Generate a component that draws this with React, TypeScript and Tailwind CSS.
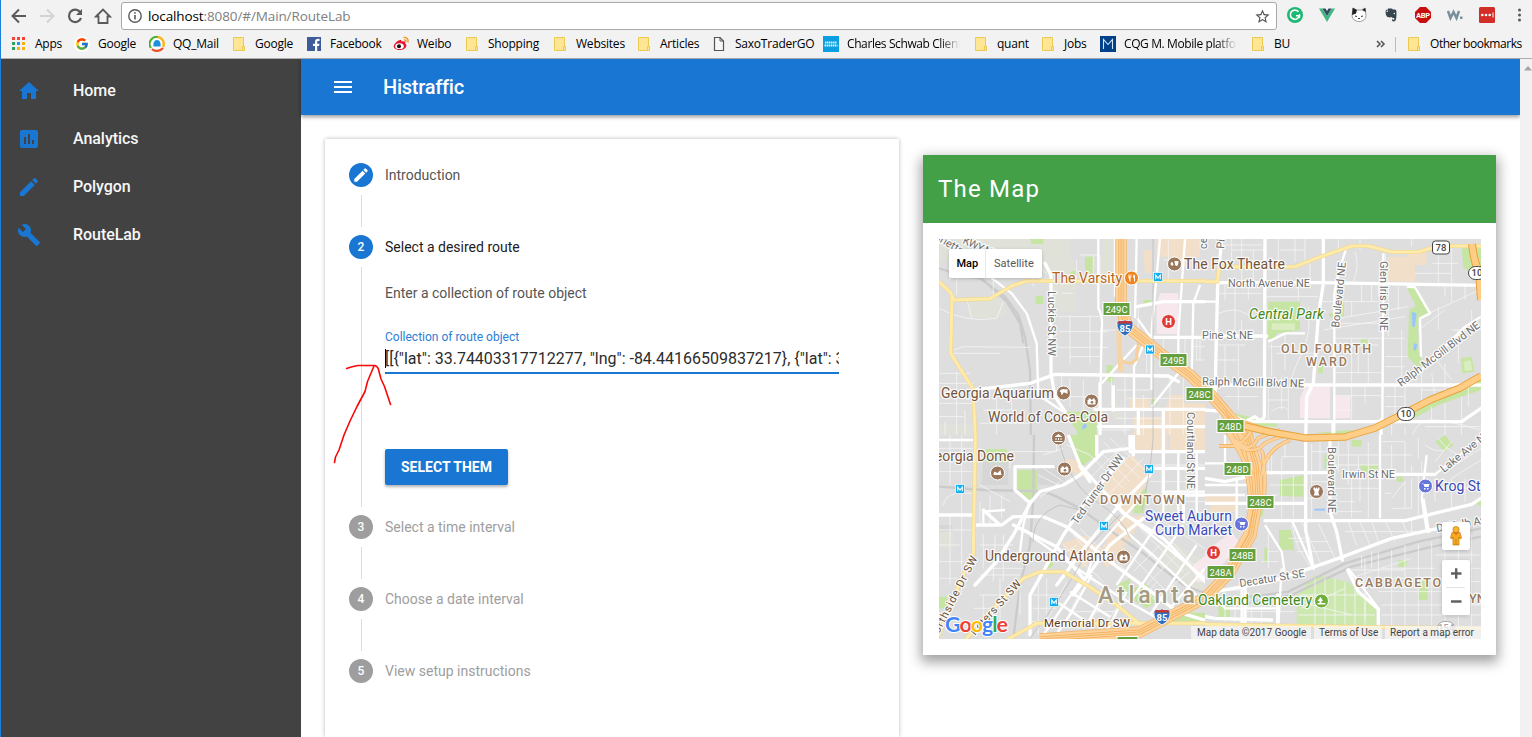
import type { ReactNode } from "react";
import { MdHome, MdAssessment, MdEdit, MdBuild, MdMenu, MdStarBorder } from "react-icons/md";
import { FcGoogle } from "react-icons/fc";

/* ---------- Browser chrome ---------- */

const Folder = () => (
  <svg className="shrink-0" width="16" height="16" viewBox="0 0 16 16">
    <path d="M2.500 1.500h10v9h1v4h-11z" fill="#ffe694" stroke="#ecc94f" />
    <path d="M11.500 14v-3.500h2" fill="none" stroke="#ecc94f" />
  </svg>
);
const AppsIcon = () => (
  <svg width="16" height="16" viewBox="0 0 16 16">
    {["#f44336", "#f44336", "#f44336", "#2fa35c", "#2196f3", "#f9b10c", "#2fa35c", "#f9b10c", "#f9b10c"].map((c, i) => (
      <rect key={i} x={1 + (i % 3) * 5} y={1 + Math.floor(i / 3) * 5} width="3" height="3" fill={c} />
    ))}
  </svg>
);
const GoogleG = () => (
  <span className="flex size-4 items-center justify-center rounded-full bg-white"><FcGoogle size={14} /></span>
);
const QQ = () => (
  <svg width="16" height="16" viewBox="0 0 16 16">
    <circle cx="8" cy="8" r="7.500" fill="#fff" />
    <path d="M9 1A7 7 0 0 0 2 12" fill="none" stroke="#4cae2c" strokeWidth="2" />
    <path d="M9 1a7 7 0 0 1 5 10" fill="none" stroke="#f9b51b" strokeWidth="2.500" />
    <path d="M3 13c3 3 8 2.500 11-1" fill="none" stroke="#f04e23" strokeWidth="2.200" />
    <path d="M8 4c3 0 4 3 3.500 6.500h-7C4 7 5 4 8 4z" fill="#1c8fe0" />
  </svg>
);
const Facebook = () => (
  <svg width="16" height="16" viewBox="0 0 16 16">
    <rect x="1" y="1" width="14" height="14" fill="#3f5c9a" />
    <path d="M9 15v-5H7V7.800h2V6c0-2 1.200-3.200 3-3.200h1.500V5h-1.200c-.8 0-1.100.4-1.100 1.100v1.700h2.200l-.3 2.200h-1.900v5z" fill="#fff" />
  </svg>
);
const Weibo = () => (
  <svg width="16" height="16" viewBox="0 0 16 16">
    <path d="M5.500 4.500c2-1 3.500-.5 3 1.200 2.500-1 4.500-.2 3.700 1.800C15 9 13 14 7 14 3 14 .5 12 .7 10 1 8 3.500 5.500 5.500 4.500z" fill="#e6162d" />
    <ellipse cx="6.500" cy="10.200" rx="4.300" ry="2.900" fill="#fff" />
    <circle cx="6" cy="10.300" r="2" fill="#111" />
    <path d="M10.500 1.500c3-.6 5.300 1.700 4.300 5M11 4c1.400-.3 2.300.8 1.900 2" fill="none" stroke="#f29a1d" strokeWidth="1.400" />
  </svg>
);
const PageIcon = () => (
  <svg width="16" height="16" viewBox="0 0 16 16">
    <path d="M3.500 1.500h5.500l3.500 3.500v9.500h-9z" fill="#f7f7f7" stroke="#555" strokeWidth="1.200" />
    <path d="M9 1.500V5h3.500" fill="none" stroke="#555" />
  </svg>
);
const Schwab = () => (
  <svg width="16" height="16" viewBox="0 0 16 16">
    <rect width="16" height="16" fill="#0a9fe0" />
    <path d="M2 6.500h12M1.500 9.500h13" stroke="#d8f1fc" strokeWidth="1.800" strokeDasharray="1.500 .5" />
  </svg>
);
const Cqg = () => (
  <svg width="16" height="16" viewBox="0 0 16 16">
    <rect width="16" height="16" fill="#00418a" />
    <path d="M3.500 13V3.500l4.500 5 4.500-5V13" fill="none" stroke="#d7e4f2" strokeWidth="1.100" />
  </svg>
);

const bookmarks: { w: string; label: string; icon: ReactNode; fade?: boolean }[] = [
  { w: "w-[63px]", label: "Apps", icon: <AppsIcon /> },
  { w: "w-[75px]", label: "Google", icon: <GoogleG /> },
  { w: "w-[82px]", label: "QQ_Mail", icon: <QQ /> },
  { w: "w-[75px]", label: "Google", icon: <Folder /> },
  { w: "w-[87px]", label: "Facebook", icon: <Facebook /> },
  { w: "w-[71px]", label: "Weibo", icon: <Weibo /> },
  { w: "w-[88px]", label: "Shopping", icon: <Folder /> },
  { w: "w-[84px]", label: "Websites", icon: <Folder /> },
  { w: "w-[75px]", label: "Articles", icon: <Folder /> },
  { w: "w-[112px]", label: "SaxoTraderGO", icon: <PageIcon /> },
  { w: "w-[150px]", label: "Charles Schwab Client", icon: <Schwab />, fade: true },
  { w: "w-[67px]", label: "quant", icon: <Folder /> },
  { w: "w-[60px]", label: "Jobs", icon: <Folder /> },
  { w: "w-[150px]", label: "CQG M. Mobile platform", icon: <Cqg />, fade: true },
  { w: "w-[70px]", label: "BU", icon: <Folder /> },
];

const Extensions = () => (
  <div className="flex w-[256px] items-center gap-4 pl-[10px]">
    <svg width="16" height="16" viewBox="0 0 16 16">
      <circle cx="8" cy="8" r="8" fill="#1db874" />
      <path d="M11.500 4.800A4.600 4.600 0 1 0 12.400 8.800H9" fill="none" stroke="#fff" strokeWidth="1.600" />
      <path d="M12.500 7v4" stroke="#fff" strokeWidth="1.300" />
    </svg>
    <svg width="16" height="16" viewBox="0 0 16 16">
      <path d="M0 1.500h3.500L8 9l4.500-7.500H16L8 15z" fill="#41b883" />
      <path d="M3.500 1.500h3L8 4l1.500-2.500h3L8 9z" fill="#35495e" />
    </svg>
    <svg width="16" height="16" viewBox="0 0 16 16">
      <path d="M2 1l3.500 2h5L14 1l.8 6c1 5-3 7.500-6.800 7.500S.3 12 1.200 7z" fill="#fff" stroke="#777" strokeWidth=".7" />
      <path d="M1.700.8L6 3 5 6.500 1 8zM11 3l3.300-2 .5 4z" fill="#222" />
      <path d="M4 9l2 .5M10 9.500l2-.5M7 11.500h2" stroke="#333" />
    </svg>
    <svg width="16" height="16" viewBox="0 0 16 16">
      <path d="M5 1.500h3c1 0 1.500.5 2 1h2c1.200 0 1.500 1 1.500 4 0 4-.3 8-2.500 8-2 0-2-1-2-2.300h1.300c0 1 .3 1 .9.700V11c-1.500.3-2.200-.3-2.500-1-1 .7-4 .5-4.800-.5C3 8 2.500 6.500 2.600 5H5z" fill="#37474f" />
      <path d="M4.500 1.800v2.700H2z" fill="#37474f" /><circle cx="11.300" cy="6.500" r=".8" fill="#f2f2f2" />
    </svg>
    <svg width="16" height="16" viewBox="0 0 16 16">
      <path d="M5 0h6l5 5v6l-5 5H5l-5-5V5z" fill="#c70d0d" />
      <text x="8" y="10.700" textAnchor="middle" fontSize="7.500" fontWeight="700" fontFamily="Roboto, sans-serif" fill="#fff" textLength="14">ABP</text>
    </svg>
    <svg width="16" height="16" viewBox="0 0 16 16">
      <path d="M1 4l2.500 7L6.500 5l3 6L12 4" fill="none" stroke="#78909c" strokeWidth="2.500" />
      <rect x="13" y="9.500" width="2.500" height="2.500" fill="#78909c" />
    </svg>
    <svg width="16" height="16" viewBox="0 0 16 16">
      <rect width="16" height="16" rx="1.500" fill="#d32d27" />
      <circle cx="3.300" cy="8" r="1.300" fill="#fff" /><circle cx="7" cy="8" r="1.300" fill="#fff" /><circle cx="10.700" cy="8" r="1.300" fill="#fff" />
      <path d="M14 5.500v5" stroke="#fff" />
    </svg>
    <svg width="16" height="16" viewBox="0 0 16 16">
      <circle cx="8.500" cy="3" r="1.500" fill="#5a5a5a" /><circle cx="8.500" cy="8" r="1.500" fill="#5a5a5a" /><circle cx="8.500" cy="13" r="1.500" fill="#5a5a5a" />
    </svg>
  </div>
);

const Chrome = () => (
  <header className="flex h-[59px] shrink-0 flex-col border-b border-[#aeaeae] bg-[#f2f2f2] font-['Open_Sans','Noto_Sans',sans-serif]">
    <div className="flex h-[30px] items-center">
      <svg className="shrink-0" width="121" height="30" viewBox="0 0 121 30" fill="none" stroke="#5a5a5a" strokeWidth="2">
        <path d="M26 16H13M19 9.500L12.500 16l6.500 6.500" />
        <path d="M40 16h13M47 9.500L53.500 16 47 22.500" stroke="#d3d3d3" />
        <path d="M80.300 12.300A6.200 6.200 0 1 0 81 18" strokeWidth="2.200" />
        <path d="M82 9v6h-6z" fill="#5a5a5a" stroke="none" />
        <path d="M96 16.500L103 9.500l7 7h-2.500V23h-9v-6.500z" strokeWidth="1.800" />
      </svg>
      <div className="mt-0.5 flex h-7 w-[1156px] shrink-0 items-center rounded-[3px] border border-[#a9a9a9] bg-white pl-1.5 pr-[5px]">
        <svg width="14" height="14" viewBox="0 0 14 14" fill="none" stroke="#5a5a5a" strokeWidth="1.400">
          <circle cx="7" cy="7" r="6.200" /><path d="M7 6v4.500M7 3.300v1.500" strokeWidth="1.600" />
        </svg>
        <span className="ml-[6px] flex-1 text-[13.500px] leading-5 tracking-[-0.110px] text-[#808080]">
          <span className="text-black">localhost</span>:8080/#/Main/RouteLab
        </span>
        <MdStarBorder size={17} color="#555" />
      </div>
      <Extensions />
    </div>
    <div className="flex h-7 items-center pl-[11px] text-[12px] leading-4 tracking-[-0.220px] text-black">
      {bookmarks.map((b, i) => (
        <div key={i} className={"flex shrink-0 items-center gap-2 " + b.w}>
          <span className="size-4 shrink-0">{b.icon}</span>
          <span className={b.fade ? "w-[113px] overflow-hidden whitespace-nowrap tracking-[-0.400px] [mask-image:linear-gradient(to_right,black_82%,transparent)]" : "whitespace-nowrap"}>{b.label}</span>
        </div>
      ))}
      <svg className="ml-[56px] shrink-0" width="10" height="10" viewBox="0 0 10 10" fill="none" stroke="#555" strokeWidth="1.600">
        <path d="M1 2l3 3-3 3M5 2l3 3-3 3" />
      </svg>
      <span className="ml-[9px] mr-[10px] h-[15px] w-px bg-[#bbb]" />
      <Folder />
      <span className="ml-2 whitespace-nowrap tracking-[-0.450px]">Other bookmarks</span>
    </div>
  </header>
);

/* ---------- Map ---------- */

type Quad = {
  x: number; y: number; w: number; h: number;
  patches: [string, string][]; rails: string; thin: string; mid: string; wide: string; yellow: string;
};

const PEACH = "#f1dfc9", GREEN = "#c6e5a2", PINK = "#f7e8ee", PALE = "#e0e2da", BLUE = "#9cc6fa";

// Street geometry is drawn at three times the map scale, in four tiles.
const tiles: Quad[] = [
  {
    x: 930, y: 230, w: 825, h: 615,
    patches: [
      ["M27 27H420V75L440 120V245H385L350 130 320 60 300 80 200 80 150 120 27 90z", PALE],
      ["M115 205L215 205 230 250 190 268 120 258z", PALE], ["M520 27h40v120h-50z", PALE], ["M27 585h100v45H27z", PALE],
      ["M680 27H810V80H790V110H720V80H680z", PEACH], ["M600 505H660V540H600zM720 495H760V520H825V630H610V560H700z", PEACH],
      ["M640 60h25v70h-20z", PEACH], ["M545 520h30v50h-25z", PALE],
      ["M465 80H492V130H465zM317 197H340V222H317zM530 405H548V460L528 450zM300 27H340V42H305zM640 210H665V225H640zM665 500L685 520 665 530z", GREEN],
      ["M405 545H500V630H440L440 600 412 565zM418 135a14 12 0 0 1 28 0z", GREEN], ["M725 240h14v65h-14z", GREEN],
      ["M690 190H745V312H680V225z", PINK], ["M458 585l10-6 3 12-15 8zM490 580v12", BLUE],
    ],
    rails: "M27 115L90 135 150 145 225 200 265 255 285 320 300 420 303 630M155 145L230 215 270 280 280 340",
    thin: "M110 205L125 265M80 150V195M190 135V210M27 235Q110 280 200 265L220 215M385 260H510M420 255V400M480 255V405M510 300H560M385 305H535M372 352H535M420 380H510M440 90V150M450 75H510V140M490 75V155M395 190H430M70 360L100 350 300 352M68 370H210M60 27V150M110 100L80 150M250 80L300 90 350 130M310 170V110M27 430H120M27 460H130M80 425V630M27 520H130M27 560H100M105 540V630M45 575V630M150 580H300M160 540H250M200 470V630M245 465V540M395 440V500M420 445V530M350 500H480M460 450V540M545 445V530M585 440V630M640 495V630M720 440V630M760 440V630M590 505H760M560 480H660M790 350H825M800 322V390M810 322V390M700 90H760M715 27V150M560 565H700M795 390H825M500 600H600M625 225V300M650 322V430M700 322V390M765 322V430",
    mid: "M180 140L245 190 290 250 320 340 325 495 400 545M505 27V235Q520 260 515 300L512 455M620 27L615 265M620 345L515 460M690 27L665 300V480M765 27L745 310V430L665 530M810 165L790 220 785 440M555 27V200M622 265L665 325M625 335L665 325M640 345L612 410V540",
    wide: "M345 100L363 135V430L375 500 405 545M130 480L300 460 375 433 520 435 715 438 745 455M620 230L700 215H840M665 322H840M495 538H840M505 590H840M510 460V630M625 540V630M700 540V630M550 470V540",
    yellow: "M27 155L62 188 72 210 180 206 245 168 290 153H840M66 205L62 370 130 478 136 630",
  },
  {
    x: 1205, y: 230, w: 828, h: 615,
    patches: [
      ["M550 80H605V60H665V105H630V155H548z", PEACH],
      ["M190 215H285V300L215 310 208 330 188 326zM405 215h12v45h-45v-10h33zM467 328h22v18h-22z", GREEN],
      ["M605 172H630L675 250 640 265V360L655 405 640 412 608 382 612 240 632 228z", GREEN],
      ["M770 55H828V160L775 110zM768 385L800 380 808 425 772 430zM340 400h14v30h-14z", GREEN],
      ["M620 550L700 505 828 440V480L700 525 600 580zM90 550L215 580V590L130 588zM330 608L440 600 430 615z", GREEN],
      ["M300 470H375V565H285V505zM388 498H436V565H388z", PINK], ["M620 245l15 5-5 40h-8zM628 340l10 3-6 20-8-5z", BLUE],
      ["M775 395l22-4 5 30-22 2z", "#d9edc0"], ["M200 280h70v20h-70z", "#d9edc0"],
    ],
    rails: "",
    thin: "M80 27V100M110 27V150M80 60H180M40 45H170M145 60V150M220 27V160M270 27V95M225 60H300M300 27V90M315 100V160M40 190H170M90 165V310M40 250Q90 230 120 250 150 265 175 255M130 165V210M60 165V210M110 270V300M35 345H120M60 345V440M100 345V440M35 390H100M185 200H340M190 350H240M240 310V420M200 340V440M215 370H330M280 165V210M310 230Q320 310 290 370T255 470M340 215H530M400 265L610 230M355 300L600 260M390 280H540M390 325H600M390 345H520M440 215V260M470 165V215M500 165V215M440 325V460M490 330V460M520 165V200M390 428H530M460 375V430M550 170V320M580 170V240M590 300V460M540 380H610M540 410H600M650 260L825 180M720 170V200M700 230V300M640 300L720 240M740 165V215M540 70L550 160M450 65Q465 110 445 155M465 27V60M400 27V60M620 27V50M680 100H760M740 55V160M630 130H740M700 60V160M190 470V570M230 440V540M250 470V570M190 510H250M200 545Q230 520 250 540M45 500V570M100 470V540M60 500H160M440 465V570M480 465V520M390 497H530M390 540H440M540 500H600M570 465V555M600 465V540M540 530H600M650 420V530M680 430L690 500M720 400V480M650 480H770M620 620Q640 560 700 570T828 600M660 590H828M720 520V630M770 500V630M560 580V630M600 590V630M680 530V570M780 165V210M800 240V300M740 300H828M760 300V400M680 370L740 450M790 455V530",
    mid: "M425 50L400 130 388 190V610M535 70V160L532 570M0 215H35M190 335L240 310H300M605 170L630 172 675 250 645 265 648 380M828 260L780 290 700 370 640 430 575 465",
    wide: "M50 27L38 160 30 500M180 27L178 560Q170 580 150 560L120 575M355 27V160L340 260 325 460 305 500 302 630M35 158H340L828 166M0 465H180M300 465H828M0 318H185M0 540L60 545 120 575H770L828 535M384 575V630M528 570V630",
    yellow: "M0 155H38L42 110H270L340 83 440 48H490L560 66H640L700 48H828",
  },
  {
    x: 930, y: 435, w: 825, h: 612,
    patches: [
      ["M27 270h40v50h-40zM160 60h75v90h-80zM320 90h85v60h-80z", "#d6d6d6"],
      ["M262 105H322V170L300 195 262 165z", GREEN], ["M415 0H500V60L455 95 430 50zM165 42h65v40h-65z", GREEN],
      ["M27 485h25v35h-25zM540 310L585 290V330L570 325zM620 175L650 160V190L640 235H610zM530 245l15-10v20z", GREEN],
      ["M560 450L600 430V465L650 445 680 500 650 520 600 490zM350 375l15-8 5 25-18 10z", GREEN], ["M720 530L840 535V560H720z", GREEN],
      ["M610 0H710V50H610zM720 0H840V50H720zM610 60L660 120 600 240 560 220 540 180 480 170 560 80z", PEACH],
      ["M400 70L440 75 470 130 410 105zM395 325L470 300 510 345 460 400 410 350zM560 250L640 240 590 330 520 340zM520 330L560 320 590 345 530 400 505 360z", PEACH],
      ["M690 300L830 380V460L790 470 690 370zM690 170H740V240H690z", PALE], ["M790 390L840 350V440H800z", PINK], ["M27 290h45v50h-45z", PALE],
    ],
    rails: "M27 155L160 165 300 168Q340 165 380 185L450 220 560 300 640 355 760 450 840 480M312 0L310 190 300 330 270 450 250 610",
    thin: "M60 0V150M27 40H130M27 70H130M95 0V240M27 110H130M40 210Q45 180 80 175H130M60 240V330M95 240V480M27 285H130M27 330H90M27 380H100M27 430H80M60 330V450M150 200V265M180 180V265M215 180V250M150 150L240 200M160 300V400M195 300V380M150 330H250M180 400H280M150 420H270M190 380V440M220 300V440M150 480H230M130 520H210M160 480V560M210 430V560M270 450V540M60 500V560M300 480H400M325 440V600M350 430V600M310 520H380M300 560H370M380 0V50M410 30L480 60M340 60L400 40M325 120L385 150 330 185M340 100L400 140M340 180L390 140M240 100V50H380M480 60L580 160M500 40L600 140M520 20L630 130M540 10L650 110M470 140L580 30M500 165L620 40M530 185L640 70M430 300L500 380M450 280L590 420M400 330L520 440M470 420L570 520M380 370L440 330M420 390L480 350M600 300L700 400M630 280L760 410M660 250L800 400M560 380L680 500M590 350L710 470M610 410L690 330M650 450L740 360M690 480L780 410M660 90H840M660 140H770M730 200H840M600 500L640 440M620 520L680 440M410 440L350 560M450 470L390 590M520 500L450 600M560 520L500 600M430 530H560M470 570H600M700 260L840 350M730 240L840 320",
    mid: "M27 15H130M160 265V230L225 225M300 195L280 270 270 350M485 420L420 540 370 610M450 440L340 600M530 460L470 570M590 470L530 590M380 500L470 560M420 470L540 545M630 190L500 340 470 420M300 300L440 400 560 480 700 560M590 240L720 345 825 430M560 265L680 370 800 480M520 170L600 250M700 240L560 450M760 270L600 500M800 330L660 540M825 400L720 520M700 60V240M745 50V240M800 50V240M700 170H840",
    wide: "M27 240H130M135 270H215L250 245H340L410 275 540 380 690 490 740 530 840 560M135 450L200 380 250 300 300 205 255 165V95H370M300 205L330 170 400 150 450 120 520 50 600 40 600 0M415 0L450 90 580 235 700 310 825 440M300 600V480L345 400 400 300 480 180 580 70M380 450L470 330 560 220 660 120M430 480L540 330 640 250M160 225L210 270M500 0V60M250 270L380 335 460 430M450 95L480 140M610 0V60M700 0V180H840M600 50H840M660 100H840M760 180V260",
    yellow: "M136 0L130 355 90 440 50 540 27 600M110 610L180 530 280 430 330 410H400L470 450 560 510 630 568M235 612L320 565H840",
  },
  {
    x: 1205, y: 435, w: 828, h: 612,
    patches: [
      ["M225 135L295 120V185L225 183zM222 285H258L268 345H222zM178 338h8v45h-8zM358 60h12v40h-12zM465 90h55v20h-50z", GREEN],
      ["M440 15h30v20h-30zM690 20L720 0 745 30 720 50zM640 430h28v65h-28zM808 200L828 185V215zM580 375h25v20h-25zM575 125h20v15h-20z", GREEN],
      ["M275 480L330 420 430 440 515 525V570H275z", "#cde8af"], ["M40 510h35v40h-35zM160 210l20-5-8 40h-12z", GREEN],
      ["M0 180H100V210H0zM20 210h70v20h-80zM60 20h60v20h-60z", PEACH], ["M0 350L80 290 110 330 50 390 0 400z", PINK], ["M328 221H360V227H328z", BLUE],
    ],
    rails: "M100 490L250 470 420 385 640 320 828 280M130 505L260 480 440 395 660 340 828 305",
    thin: "M230 65H300M230 70V250M200 120V60M195 150H300M265 120V250M200 180H220M240 20V70M190 60V110M320 27V250M345 20V110M320 50H370M320 140H370M320 165H345M330 190H300M400 20V110M390 60H520M430 20V150M460 60V110M490 20V110M390 90H520M440 130V250M465 120V200M490 120V250M390 160H520M400 200H450M400 230H470M560 30V110M600 20V110M640 10V70M530 60H620M530 20H600M620 90V120M650 80V110M660 30Q700 60 730 40M700 10Q720 40 760 60M560 190L600 140V220M540 175H560M560 220H620V130M640 120V240M690 130V200M740 130V220M780 130V200M690 160H828M720 110L828 40M740 130L828 75M690 80L740 20M250 310H300M190 280V400M190 350H220M170 380H220M260 270L280 340 320 400M290 260L345 380M340 265L390 370M270 320H370M275 350H380M430 260L455 330M465 260L495 330M500 258L520 320M540 256L570 320M590 256L610 300M420 290H530M530 290H660M620 255V300M500 350V400M470 360V400M440 405H600M450 425L620 370M480 370V550M520 350V450M560 345V590M600 330V590M640 325V590M680 320V590M720 340V590M760 310V590M800 300V590M530 400H690M530 430H710M520 470H710M530 510H828M530 540H828M690 360H828M780 400H828M780 440H828M280 500L440 540M290 520L420 460M330 430V570M360 430V570M390 430V570M420 440V570M450 460V570M480 500V570M280 540H510M280 480H460M0 465H110M60 480V560M90 480V560M140 500V570M170 490V570M0 490L60 505M120 530H270",
    mid: "M60 0V90M95 130V280M0 85H60M0 150H130M0 180H120M230 400L220 570M110 440V570M20 470L60 520H220M525 0V250M430 400L520 520V570M690 118L828 10M260 255L325 400M180 270L230 350 240 420M665 60L650 190 665 285",
    wide: "M302 20V285L325 400M375 20V230L395 290 412 375M180 113H365M0 205H300M180 257H600L700 232 800 208 828 190M525 118H690M30 470L200 440 400 370 560 310 700 280M0 545L30 550 200 555M655 195L670 290M428 405L460 470 520 522V600M120 450V575M218 480V570M0 130L60 140 130 125",
    yellow: "M0 568L540 577 828 580",
  },
];

const tileTransform = (t: Quad) => `translate(${t.x} ${t.y}) scale(.33333)`;

const Layer = ({ k, color, width, edge, join }: { k: "rails" | "thin" | "mid" | "wide" | "yellow"; color: string; width: number; edge?: string; join?: boolean }) => (
  <>
    {tiles.map((t, i) => (
      <g key={i} transform={tileTransform(t)} clipPath={`url(#tile${i})`} fill="none" strokeLinejoin="round" strokeLinecap={join ? "round" : "butt"}>
        {edge && <path d={t[k]} stroke={edge} strokeWidth={width + 3} />}
        <path d={t[k]} stroke={color} strokeWidth={width} />
      </g>
    ))}
  </>
);

// Interstate and freeway ribbons, in map units.
const interstate = "M1121 239V302Q1122 318 1130 329L1165 357 1190 375 1212 396 1230 417 1247 435 1256 465 1258 495 1251 535 1230 572 1205 598 1163 620 1140 632 1040 639";
const connector = "M1225 410L1236 432 1246 452 1252 480 1254 505 1248 535 1232 562";
const freeway10 = "M1481 376L1460 388 1430 400 1405 413 1375 428 1345 437 1305 438 1270 432 1245 426";
const ramps = "M1236 440Q1250 455 1258 438L1280 430M1222 424Q1240 452 1252 475M1232 440Q1245 455 1260 448 1266 440 1285 436M1262 475Q1264 450 1290 440M1250 500Q1248 455 1225 425M1264 500Q1266 470 1262 450M1238 420L1262 428 1290 434M1219 446H1236Q1246 440 1252 430";

const Interstates = () => (
  <g fill="none" strokeLinejoin="round">
    <path d="M1130 329l10 10q-4 12 -3 20l-6 4q-9 1 -12 -8" stroke="#f6cf9b" strokeWidth="3" />
    <path d="M1121 302q-4 30 0 70" stroke="#f6d4a6" strokeWidth="5" />
    <path d={interstate} stroke="#efb264" strokeWidth="11.500" />
    <path d={connector} stroke="#efb264" strokeWidth="10" />
    <path d={connector} stroke="#fcd29a" strokeWidth="9" />
    <path d={interstate} stroke="#fcd29a" strokeWidth="10.200" />
    <path d={interstate} stroke="#f1ad58" strokeWidth="5" />
    <path d={interstate} stroke="#fcd29a" strokeWidth="3.600" />
    <path d={interstate} stroke="#f1ad58" strokeWidth=".8" />
    <path d={connector} stroke="#f1ad58" strokeWidth=".8" />
    <path d={ramps} stroke="#efab55" strokeWidth="3.800" />
    <path d={ramps} stroke="#fcd29a" strokeWidth="2.700" />
    <path d={freeway10} stroke="#e9a23b" strokeWidth="7.500" />
    <path d={freeway10} stroke="#ffcd85" strokeWidth="5.500" />
    <path d="M1472 244Q1474 262 1479 272L1481 300" stroke="#e9a23b" strokeWidth="8" />
    <path d="M1472 244Q1474 262 1479 272L1481 300" stroke="#ffcd85" strokeWidth="6" />
  </g>
);

const Tx = ({ x, y, len, rot = 0, size = 11, fill = "#6f6f6f", w = 400, children, anchor = "start", italic = false }: {
  x: number; y: number; len?: number; rot?: number; size?: number; fill?: string; w?: number; children: ReactNode; anchor?: "start" | "end"; italic?: boolean;
}) => (
  <text transform={`translate(${x} ${y}) rotate(${rot})`} fontSize={size} fill={fill} fontWeight={w} textLength={len} textAnchor={anchor}
    fontStyle={italic ? "italic" : "normal"} stroke="#fff" strokeOpacity=".85" strokeWidth="2.500" strokeLinejoin="round" paintOrder="stroke">{children}</text>
);

const Exit = ({ x, y, t }: { x: number; y: number; t: string }) => (
  <g>
    <rect x={x} y={y} width="27" height="13" fill="#66a03e" stroke="#fff" />
    <text x={x + 13.500} y={y + 10} fontSize="9.500" fill="#fff" textAnchor="middle">{t}</text>
  </g>
);

const Metro = ({ x, y }: { x: number; y: number }) => (
  <g>
    <rect x={x - 4.500} y={y - 4.500} width="9" height="9" fill="#12aef2" stroke="#fff" strokeWidth=".7" />
    <path d={`M${x - 2.300} ${y + 2.300}v-4.200l2.300 3 2.300-3v4.200`} fill="none" stroke="#fff" strokeWidth="1.100" />
  </g>
);

const glyphs = {
  fish: "M-4-2q3-3 6-1.500l2-.5v5q-2-2-4-1.500-1 2.500-2 2.500 0-3-2-4z",
  camera: "M-4-1h1v-1.500h2L0-1h.500l1-1.500h1.500L3.500-1H4v4.500h-8z",
  theatre: "M-4 0q0-2 2-2l1 3q-2 2-3-1zM0-3h4q0 5-2 5T0-3z",
  museum: "M-4-1L0-4l4 3zM-3 0h1v2h-1zM-.500 0h1v2h-1zM2 0h1v2H2zM-4 3h8v1h-8z",
  dome: "M-4 2q0-4 2-3l2 1 3-3 1 5z",
  tower: "M-3-4h1.500v1h1v-1h1v1h1v-1H3v2L2 0v2l1 2h-6l1-2V0l-1-2z",
  cart: "M-4-3h1.500l.5 1h6l-1 3h-4l-1-3M-1.500 2h1.500v1.500h-1.500zM1.500 2H3v1.500H1.500z",
  food: "M-3-3.500v3q1 1 1 4h1v-4q1 0 1-3h-.7v2h-.5v-2h-.6v2h-.5v-2zM2-3.500q2 0 1.500 3v4h-1v-3.500h-1z",
  tree: "M-1-4l2.500 4H0v2h4v1.500h-8V2h2V0h-2z",
};
const Poi = ({ x, y, g, fill = "#9a765b" }: { x: number; y: number; g?: keyof typeof glyphs; fill?: string }) => (
  <g transform={`translate(${x + 0.500} ${y})`}>
    <circle r="7" fill={fill} stroke="#fff" strokeWidth="1" />
    {g ? <path d={glyphs[g]} fill="#fff" /> : <text y="3.500" fontSize="9.500" fontWeight="700" fill="#fff" textAnchor="middle">H</text>}
    {g === "camera" && <circle cx=".5" cy="1.200" r="1.300" fill={fill} />}
  </g>
);

const Shield85 = ({ x, y }: { x: number; y: number }) => (
  <g transform={`translate(${x} ${y})`}>
    <path d="M-8-5.500l2-2.200q3 1.200 6-.2 3 1.400 6 .2l2 2.200q1 9-8 13.500-9-4.500-8-13.500z" fill="#2f6fc0" stroke="#fff" strokeWidth=".8" />
    <path d="M-7.500-4.500l1.500-2.700q3 1.200 6-.2 3 1.400 6 .2l1.500 2.700z" fill="#c9352f" />
    <text y="4.200" fontSize="9.500" fontWeight="700" fill="#fff" textAnchor="middle">85</text>
  </g>
);
const Badge = ({ x, y, t, rx = 7, tone = "#444" }: { x: number; y: number; t: string; rx?: number; tone?: string }) => (
  <g>
    <rect x={x - 8.500} y={y - 6.500} width="17" height="13" rx={rx} fill="#fff" stroke={tone} />
    <text x={x} y={y + 3.400} fontSize="9.500" fontWeight="500" fill={tone} textAnchor="middle">{t}</text>
  </g>
);

const brown = "#73543c", tan = "#997a5c", indigo = "#3a49b8";

const MapCanvas = () => (
  <svg className="block" width="542" height="400" viewBox="939 239 542 400" fontFamily="Roboto, sans-serif">
    <defs>
      {tiles.map((t, i) => (
        <clipPath key={i} id={`tile${i}`}><rect x="0" y="0" width={t.w} height={t.h} /></clipPath>
      ))}
    </defs>
    <rect x="939" y="239" width="542" height="400" fill="#dedede" />
    {tiles.map((t, i) => (
      <g key={i} transform={tileTransform(t)} clipPath={`url(#tile${i})`}>
        {t.patches.map(([d, c], j) => <path key={j} d={d} fill={c} />)}
      </g>
    ))}
    <Layer k="rails" color="#cbcbcb" width={7} />
    <Layer k="thin" color="#f3f3f3" width={2.600} />
    <Layer k="mid" color="#fff" width={7} />
    <Layer k="wide" color="#fff" width={10} join />
    <path d="M1153 239V440L1150 469 1142 510M1060 445Q1070 485 1097 502T1130 538M1120 515L1090 545 1077 570 1057 602 1030 638M1033 542Q1033 515 1060 505L1080 510" fill="none" stroke="#bdbdbd" strokeWidth=".8" />
    <Layer k="yellow" color="#feeaa9" width={9} edge="#efd488" join />
    <Interstates />

    <Tx x={962} y={243} rot={25} len={40}>KWY NW</Tx>
    <Tx x={934} y={239} rot={30}>arietta St</Tx>
    <Tx x={1048} y={291} rot={90} len={65}>Luckie St NW</Tx>
    <Tx x={1187} y={412} rot={90} len={77}>Courtland St NE</Tx>
    <Tx x={1339} y={328} rot={-84} len={66}>Boulevard NE</Tx>
    <Tx x={1380} y={261} rot={90} len={70}>Glen Iris Dr NE</Tx>
    <Tx x={1328} y={447} rot={90} len={66}>Boulevard NE</Tx>
    <Tx x={1224} y={249} rot={-85}>Pi</Tx>
    <Tx x={1207} y={249} rot={-90}>ce</Tx>
    <Tx x={1228} y={287} len={82}>North Avenue NE</Tx>
    <Tx x={1202} y={339} len={51}>Pine St NE</Tx>
    <Tx x={1202} y={385} rot={1.300} len={102}>Ralph McGill Blvd NE</Tx>
    <Tx x={1401} y={387} rot={-37} len={100}>Ralph McGill Blvd NE</Tx>
    <Tx x={1342} y={478} len={53}>Irwin St NE</Tx>
    <Tx x={1444} y={473} rot={-39}>Lake Ave NE</Tx>
    <Tx x={1437} y={532} rot={-10}>DeKalb Ave</Tx>
    <Tx x={1240} y={587} rot={-9} len={66}>Decatur St SE</Tx>
    <Tx x={1077} y={525} rot={-55} len={82}>Ted Turner Dr NW</Tx>
    <Tx x={939} y={634} rot={-63} len={85} fill="#69503f">orthside Dr SW</Tx>
    <Tx x={975} y={636} rot={-48} len={70} fill="#69503f">Peters St SW</Tx>
    <Tx x={1044} y={627} len={86} fill="#5d3a24" size={11.500}>Memorial Dr SW</Tx>

    <Tx x={1281} y={353} len={90} size={12.500} w={500} fill={tan}>OLD FOURTH</Tx>
    <Tx x={1306} y={366} len={41} size={12.500} w={500} fill={tan}>WARD</Tx>
    <Tx x={1100} y={504} len={85} size={12.500} w={500} fill={tan}>DOWNTOWN</Tx>
    <Tx x={1355} y={587} len={86} size={12.500} w={500} fill={tan}>CABBAGETO</Tx>
    <Tx x={1469} y={603} size={12.500} w={500} fill={tan}>YN</Tx>
    <Tx x={1098} y={603} len={97} size={23} w={500} fill="#a49982">Atlanta</Tx>

    <Tx x={1052} y={283} len={70} size={14} fill="#b5651d">The Varsity</Tx>
    <Tx x={1184} y={269} len={101} size={14} fill={brown}>The Fox Theatre</Tx>
    <Tx x={941} y={398} len={113} size={14} fill={brown}>Georgia Aquarium</Tx>
    <Tx x={988} y={422} len={120} size={14} fill={brown}>World of Coca-Cola</Tx>
    <Tx x={1014} y={461} size={14} anchor="end" fill={brown}>Georgia Dome</Tx>
    <Tx x={985} y={561} len={129} size={14} fill={brown}>Underground Atlanta</Tx>
    <Tx x={1249} y={319} len={75} size={14} italic fill="#43891a">Central Park</Tx>
    <Tx x={1198} y={605} len={114} size={14} fill="#43891a">Oakland Cemetery</Tx>
    <Tx x={1145} y={521} len={87} size={14} fill={indigo}>Sweet Auburn</Tx>
    <Tx x={1155} y={535} len={77} size={14} fill={indigo}>Curb Market</Tx>
    <Tx x={1435} y={491} size={14} fill={indigo}>Krog Street</Tx>

    <Exit x={1103} y={302.500} t="249C" /><Exit x={1160} y={353.500} t="249B" /><Exit x={1186} y={387.500} t="248C" />
    <Exit x={1217} y={419.500} t="248D" /><Exit x={1224} y={462.500} t="248D" /><Exit x={1247} y={495.500} t="248C" />
    <Exit x={1229} y={548.500} t="248B" /><Exit x={1207} y={565.500} t="248A" />
    <rect x="1117" y="636.500" width="21" height="6" fill="#66a03e" stroke="#fff" />
    <Metro x={1158} y={277} /><Metro x={1150} y={349.500} /><Metro x={1149} y={469} /><Metro x={1104} y={526} /><Metro x={1054} y={602} /><Metro x={960} y={489} />
    <Poi x={1131} y={278} g="food" fill="#f0851f" /><Poi x={1174} y={264} g="theatre" /><Poi x={1063} y={393} g="fish" />
    <Poi x={1091} y={401} g="camera" /><Poi x={1058} y={438} g="museum" /><Poi x={997} y={473} g="dome" />
    <Poi x={1064} y={469} g="camera" /><Poi x={1123} y={557} g="camera" /><Poi x={1316} y={491.500} g="tower" />
    <Poi x={1425} y={486} g="cart" fill="#6676dc" /><Poi x={1241} y={524} g="cart" fill="#6676dc" />
    <Poi x={1321} y={601} g="tree" fill="#6fae3a" /><Poi x={1168} y={321.500} fill="#df3b36" /><Poi x={1213} y={552.500} fill="#df3b36" />
    <Shield85 x={1125} y={328} /><Shield85 x={1162} y={617} />
    <Badge x={1441} y={247.500} t="78" rx={3} /><Badge x={1477} y={273} t="10" /><Badge x={1406} y={414} t="10" /><Badge x={1446} y={628} t="154" tone="#a5a5a5" />

    <text x="945" y="632" fontSize="21.500" fontFamily="Lato, Roboto, sans-serif" fontWeight="700" textLength="63" stroke="#fff" strokeWidth="2" paintOrder="stroke">
      <tspan fill="#4285f4">G</tspan><tspan fill="#ea4335">o</tspan><tspan fill="#fbbc05">o</tspan><tspan fill="#4285f4">g</tspan><tspan fill="#34a853">l</tspan><tspan fill="#ea4335">e</tspan>
    </text>
  </svg>
);

const MapView = () => (
  <div className="relative h-[400px] w-[542px] overflow-hidden">
    <MapCanvas />
    <div className="absolute left-2.5 top-2.5 flex h-[29px] rounded-[2px] bg-white text-[11px] leading-[29px] shadow-[0_1px_4px_-1px_rgba(0,0,0,0.3)]">
      <span className="w-[37px] border-r border-[#e8e8e8] pl-[7.500px] font-medium tracking-[-0.050px] text-black">Map</span>
      <span className="w-14 pl-2 tracking-[0.050px] text-[#565656]">Satellite</span>
    </div>
    <div className="absolute right-[11px] top-[283px] flex size-7 items-center justify-center rounded-[2px] bg-white shadow-[0_1px_4px_-1px_rgba(0,0,0,0.3)]">
      <svg width="14" height="20" viewBox="0 0 14 20">
        <path d="M3 6.500Q7 5 11 6.500L12.500 12l-1.500 1-1-2v8H4v-8l-1 2-1.500-1z" fill="#f8a91d" stroke="#b97813" strokeWidth=".7" />
        <path d="M7 13v6" stroke="#b97813" strokeWidth=".7" />
        <circle cx="7" cy="3.600" r="3.100" fill="#fbb52c" stroke="#b97813" strokeWidth=".7" />
        <path d="M4.500 6.500h5L7 9z" fill="#e8632c" />
      </svg>
    </div>
    <div className="absolute right-[11px] top-[321px] flex h-[55px] w-7 flex-col items-center rounded-[2px] bg-white shadow-[0_1px_4px_-1px_rgba(0,0,0,0.3)]">
      <svg width="28" height="55" viewBox="0 0 28 55" stroke="#616161" strokeWidth="2.400">
        <path d="M9 13.500h10.500M14.200 8.300v10.500M9 41.500h10.500" />
        <path d="M4 27.500h19" stroke="#e3e3e3" strokeWidth="1" />
      </svg>
    </div>
    <div className="absolute bottom-0 right-0 flex h-[13px] gap-[3px] whitespace-nowrap text-[10px] leading-[13px] text-[#444]">
      <span className="w-[120px] bg-[#f5f5f5]/75 pl-1.5 tracking-[0.020px]">Map data ©2017 Google</span>
      <span className="w-[68px] bg-[#f5f5f5]/75 pl-[5px]">Terms of Use</span>
      <span className="w-[96px] bg-[#f5f5f5]/75 pl-[5px] tracking-[0.030px]">Report a map error</span>
    </div>
  </div>
);

/* ---------- Application ---------- */

const nav = [
  { label: "Home", Icon: MdHome },
  { label: "Analytics", Icon: MdAssessment },
  { label: "Polygon", Icon: MdEdit },
  { label: "RouteLab", Icon: MdBuild },
];

const StepHead = ({ n, label, state }: { n: ReactNode; label: string; state: "done" | "active" | "todo" }) => (
  <div className="flex h-6 items-center gap-3 text-sm">
    <span className={"flex size-6 items-center justify-center rounded-full text-xs font-medium text-white " + (state === "todo" ? "bg-[#9e9e9e]" : "bg-[#1976d2]")}>{n}</span>
    <span className={state === "todo" ? "text-[#9e9e9e]" : state === "active" ? "text-[#1c1c1c]" : "text-[#555]"}>{label}</span>
  </div>
);
const StepLine = () => <div className="my-2 ml-3 h-8 w-px bg-[#dcdcdc]" />;

const Stepper = () => (
  <section className="mt-6 flex w-[574px] flex-col bg-white p-6 shadow-[0_0_4px_rgba(0,0,0,0.28)]">
    <StepHead n={<MdEdit size={18} />} label="Introduction" state="done" />
    <StepLine />
    <StepHead n="2" label="Select a desired route" state="active" />
    <div className="my-2 ml-3 flex h-60 w-[478px] flex-col border-l border-[#dcdcdc] pl-[23px]">
      <p className="mt-4 text-sm leading-5 text-[#555]">Enter a collection of route object</p>
      <label className="mt-[26px] text-xs leading-4 text-[#2a80d6]">Collection of route object</label>
      <div className="flex h-[29px] items-start overflow-hidden whitespace-nowrap border-b-2 border-[#1976d2] pt-[4px] text-base leading-[19px] tracking-[-0.010px] text-[#2c2c2c]">
        <span className="-mr-px h-[19px] w-px shrink-0 bg-black" />
        {'[[{"lat": 33.74403317712277, "lng": -84.44166509837217}, {"lat": 33.744'}
      </div>
      <button className="mt-[75px] h-9 w-[123px] shrink-0 rounded-[2px] bg-[#1976d2] text-sm font-bold text-white shadow-[0_2px_3px_rgba(0,0,0,0.3)]">SELECT THEM</button>
    </div>
    <StepHead n="3" label="Select a time interval" state="todo" />
    <StepLine />
    <StepHead n="4" label="Choose a date interval" state="todo" />
    <StepLine />
    <StepHead n="5" label="View setup instructions" state="todo" />
  </section>
);

export default function App() {
  return (
    <div className="relative flex h-[737px] w-[1532px] flex-col overflow-hidden border-l border-[#1a7fdd] bg-white font-['Roboto',sans-serif]">
      <div className="-ml-px flex flex-col"><Chrome /></div>
      <div className="flex min-h-0 flex-1">
        <nav className="flex w-[300px] shrink-0 flex-col bg-[#424242] pt-[8px]">
          {nav.map(({ label, Icon }) => (
            <div key={label} className="flex h-12 items-center pl-4 text-base font-medium tracking-[-0.050px] text-[#f7f7f7]">
              <Icon size={24} color="#1976d2" />
              <span className="ml-8">{label}</span>
            </div>
          ))}
        </nav>
        <div className="flex min-w-0 flex-1 flex-col">
          <div className="z-10 flex h-14 shrink-0 items-center bg-[#1976d2] pl-[30px] text-white shadow-[0_2px_4px_rgba(0,0,0,0.4)]">
            <MdMenu size={24} />
            <h1 className="ml-7 text-xl font-medium tracking-[-0.250px]">Histraffic</h1>
          </div>
          <main className="flex min-h-0 flex-1 gap-6 pl-6">
            <Stepper />
            <section className="mt-10 flex h-[500px] w-[573px] shrink-0 flex-col bg-white shadow-[0_5px_12px_2px_rgba(0,0,0,0.38)]">
              <h2 className="flex h-[68px] items-center bg-[#43a047] pl-[15px] text-2xl font-normal tracking-[1.200px] text-white">The Map</h2>
              <div className="p-4"><MapView /></div>
            </section>
          </main>
        </div>
        <div className="z-20 w-3 shrink-0 overflow-hidden bg-[#f1f1f1] pl-1 pt-[7px]">
          <svg width="8" height="5" viewBox="0 0 8 5"><path d="M0 4.500L4 0l4 4.500z" fill="#a3a3a3" /></svg>
        </div>
      </div>
      <svg className="pointer-events-none absolute left-[329px] top-[355px]" width="70" height="115" viewBox="330 355 70 115" fill="none" stroke="#f90707" strokeWidth="1.600" strokeLinecap="round" strokeLinejoin="round">
        <path d="M334.500 462.500L335.500 457 339 450 344 435 350 421 357 406.500 365 391.500 367.500 381.500 374 366" />
        <path d="M346.500 368.500Q352 366.500 358 365.500H375Q378.500 367 379 371.500L381 379 384.500 386.500 387 394 390.500 404.500" />
      </svg>
    </div>
  );
}
